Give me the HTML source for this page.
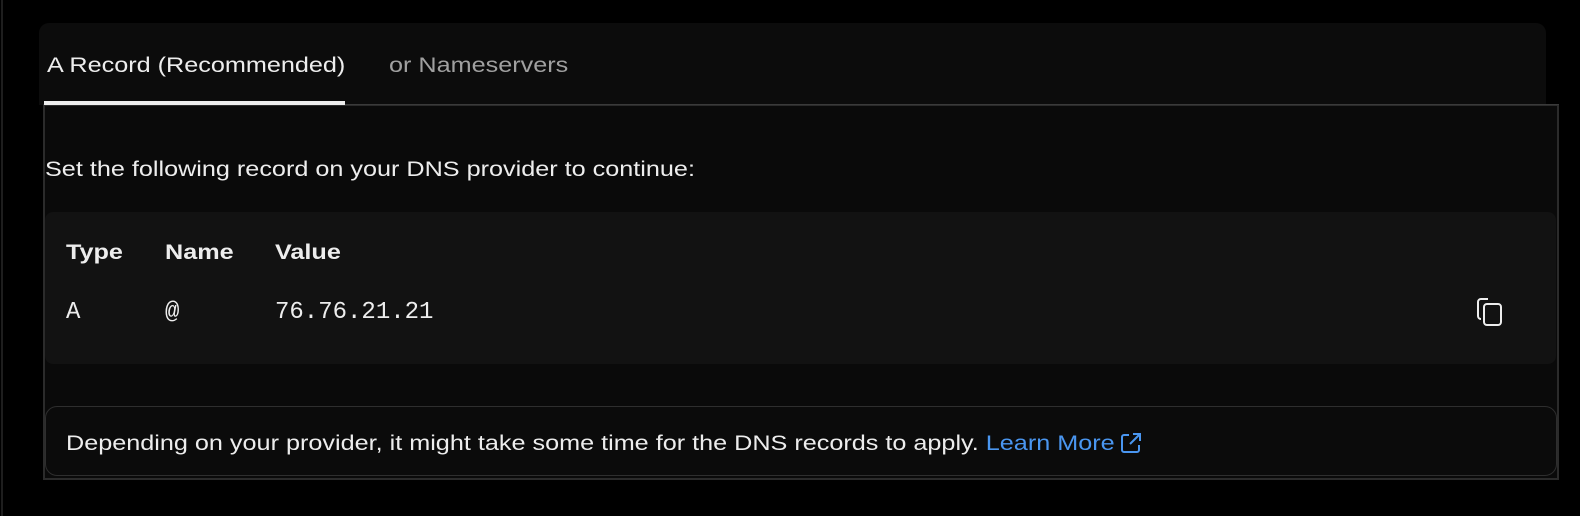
<!DOCTYPE html>
<html><head><style>
*{margin:0;padding:0;box-sizing:border-box}
body{width:1580px;height:516px;background:#000;position:relative;overflow:hidden;font-family:"Liberation Sans",sans-serif;color:#ededed}
.vl{position:absolute;left:1px;top:0;width:2px;height:516px;background:#1e1e1e}
.head{position:absolute;left:39px;top:23px;width:1507px;height:82px;background:#0c0c0c;border-radius:10px 10px 0 0}
.tab{position:absolute;top:54px;font-size:21px;transform:scaleX(1.2);transform-origin:left;white-space:nowrap}
.ul{position:absolute;left:44px;top:101px;width:301px;height:4px;background:#ededed}
.box{position:absolute;left:43px;top:104px;width:1516px;height:376px;background:#0a0a0a;border:2px solid #2b2b2b}
.t{position:absolute;font-size:21px;white-space:nowrap}
.s{transform:scaleX(1.2);transform-origin:left}
.tbl{position:absolute;left:45px;top:212px;width:1511px;height:152px;background:#121212;border-radius:8px}
.b{font-weight:bold;transform:scaleX(1.2);transform-origin:left}
.m{font-family:"Liberation Mono",monospace;font-size:24px}
.note{position:absolute;left:45px;top:406px;width:1512px;height:70px;border:1px solid #2e2e2e;border-radius:12px;background:#0b0b0b}
</style></head><body>
<div class="vl"></div>
<div class="head"></div>
<div class="box"></div>
<div class="tab" style="left:47px;color:#ededed">A Record (Recommended)</div>
<div class="tab" style="left:389px;color:#a0a0a0">or Nameservers</div>
<div class="ul"></div>
<div style="position:absolute;left:345px;top:104px;width:1214px;height:1px;background:#3a3a3a"></div>
<div class="t s" style="left:45px;top:158px">Set the following record on your DNS provider to continue:</div>
<div class="tbl"></div>
<div class="t b" style="left:66px;top:241px">Type</div>
<div class="t b" style="left:165px;top:241px">Name</div>
<div class="t b" style="left:275px;top:241px">Value</div>
<div class="t m" style="left:66px;top:299px">A</div>
<div class="t m" style="left:165px;top:299px">@</div>
<div class="t m" style="left:275px;top:299px">76.76.21.21</div>
<svg style="position:absolute;left:1476px;top:297px" width="28" height="30" viewBox="0 0 28 30" fill="none" stroke="#ededed" stroke-width="2"><path d="M12 2H5a3 3 0 0 0-3 3v14a3 3 0 0 0 3 3"/><rect x="8" y="7" width="17" height="21" rx="3"/></svg>
<div class="note"></div>
<div class="t s" style="left:66px;top:432px">Depending on your provider, it might take some time for the DNS records to apply. <span style="color:#4a96f0">Learn More</span></div>
<svg style="position:absolute;left:1120px;top:432px" width="22" height="22" viewBox="0 0 22 22" fill="none" stroke="#4a96f0" stroke-width="2"><path d="M9 3H4a2 2 0 0 0-2 2v13a2 2 0 0 0 2 2h13a2 2 0 0 0 2-2v-5"/><path d="M13 2h7v7M20 2L10 12"/></svg>
</body></html>
